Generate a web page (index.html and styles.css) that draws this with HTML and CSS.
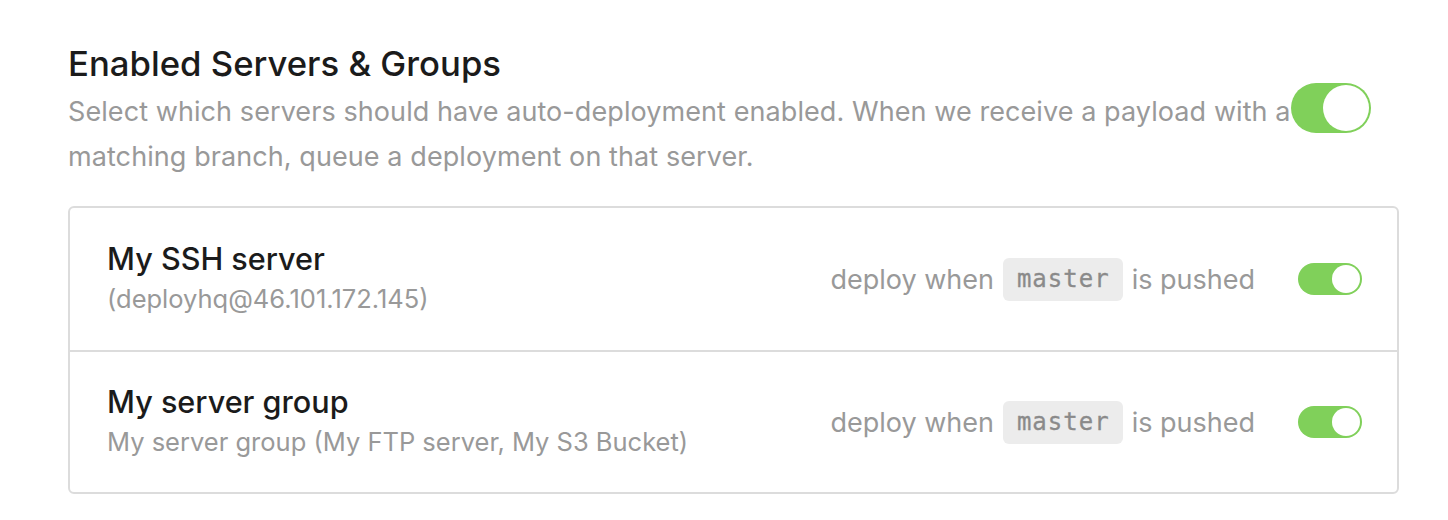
FILE: index.html
```html
<!DOCTYPE html>
<html>
<head>
<meta charset="utf-8">
<link rel="stylesheet" href="styles.css">
</head>
<body>
<section class="section">
  <h2 class="title">Enabled Servers &amp; Groups</h2>
  <div class="intro">
    <p class="desc">Select which servers should have auto-deployment enabled. When we receive a payload with a matching branch, queue a deployment on that server.</p>
    <span class="toggle toggle-lg"><span class="knob"></span></span>
  </div>
  <div class="card">
    <div class="row">
      <div class="info">
        <div class="name">My SSH server</div>
        <div class="sub">(deployhq@46.101.172.145)</div>
      </div>
      <div class="rule">
        <span>deploy when</span>
        <code class="branch">master</code>
        <span>is pushed</span>
      </div>
      <span class="toggle"><span class="knob"></span></span>
    </div>
    <div class="row">
      <div class="info">
        <div class="name">My server group</div>
        <div class="sub">My server group (My FTP server, My S3 Bucket)</div>
      </div>
      <div class="rule">
        <span>deploy when</span>
        <code class="branch">master</code>
        <span>is pushed</span>
      </div>
      <span class="toggle"><span class="knob"></span></span>
    </div>
  </div>
</section>
</body>
</html>
```

FILE: styles.css
```css
* { box-sizing: border-box; }
html, body { margin: 0; padding: 0; background: #fff; }
body {
  font-family: Inter, "Helvetica Neue", Arial, sans-serif;
  color: #1b1b1b;
}
.section {
  padding: 41px 49px 0 68px;
  width: 1448px;
}
.title {
  margin: 0;
  font-size: 34.7px;
  font-weight: 500;
  line-height: 44px;
}
.intro {
  position: relative;
  margin-top: 4px;
}
.desc {
  margin: 0;
  width: 1228px;
  font-size: 27px;
  letter-spacing: 0.08px;
  line-height: 45px;
  color: #999;
}
.toggle {
  display: inline-block;
  position: relative;
  width: 64px;
  height: 32px;
  border-radius: 16px;
  background: #80d05a;
  flex: none;
}
.toggle .knob {
  position: absolute;
  right: 2px;
  top: 2px;
  width: 28px;
  height: 28px;
  border-radius: 50%;
  background: #fff;
}
.toggle-lg {
  position: absolute;
  left: 1223px;
  top: -6px;
  width: 80px;
  height: 50px;
  border-radius: 25px;
}
.toggle-lg .knob {
  width: 46px;
  height: 46px;
}
.card {
  margin-top: 27px;
  border: 2px solid #dcdcdc;
  border-radius: 6px;
}
.row {
  display: flex;
  align-items: center;
  height: 142px;
  padding: 0 35px 0 37px;
}
.row + .row {
  border-top: 2px solid #dcdcdc;
}
.info { flex: 1; }
.name {
  font-size: 30.6px;
  font-weight: 500;
  line-height: 36px;
}
.sub {
  margin-top: 4px;
  font-size: 25.5px;
  line-height: 36px;
  color: #999;
}
.rule {
  display: flex;
  align-items: center;
  gap: 9px;
  font-size: 27px;
  color: #999;
  margin-right: 43px;
}
.branch {
  display: inline-block;
  height: 43px;
  line-height: 43px;
  padding: 0 13px 0 14px;
  border-radius: 6px;
  background: #ececec;
  font-family: "DejaVu Sans Mono", "Liberation Mono", monospace;
  font-size: 24px;
  letter-spacing: 1px;
  color: #8a8a8a;
  -webkit-text-stroke: 0.3px #8a8a8a;
}
```
